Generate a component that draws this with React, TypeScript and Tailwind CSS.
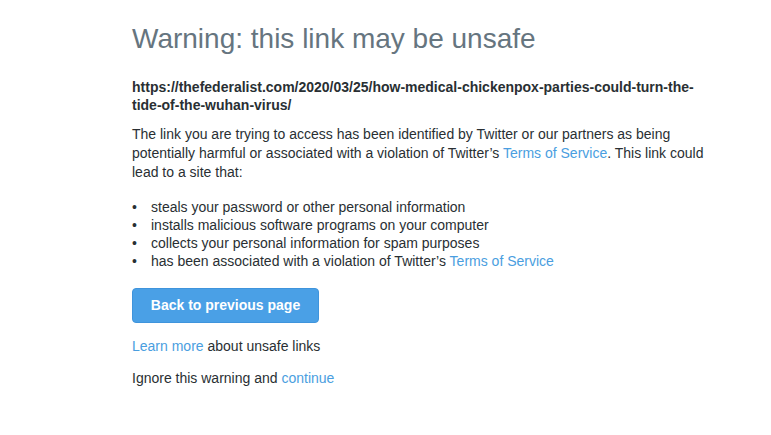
import React from "react";

const Link: React.FC<{ children: React.ReactNode }> = ({ children }) => (
  <a href="#" className="text-[#4a9ee0] no-underline">
    {children}
  </a>
);

const reasons: React.ReactNode[] = [
  "steals your password or other personal information",
  "installs malicious software programs on your computer",
  "collects your personal information for spam purposes",
  <>
    has been associated with a violation of Twitter’s <Link>Terms of Service</Link>
  </>,
];

export default function App() {
  return (
    <div className="min-h-screen bg-white font-['Liberation_Sans',Arial,sans-serif] text-[14px] text-[#292f33]">
      <div className="ml-[132px] w-[580px] pt-[22px]">
        <h1 className="text-[28px] leading-[34px] font-normal text-[#66757f]">
          Warning: this link may be unsafe
        </h1>

        <p className="mt-[22px] font-bold leading-[18px] break-words">
          https://thefederalist.com/2020/03/25/how-medical-chickenpox-parties-could-turn-the-tide-of-the-wuhan-virus/
        </p>

        <p className="mt-[11px] leading-[19px]">
          The link you are trying to access has been identified by Twitter or our partners as being
          potentially harmful or associated with a violation of Twitter’s{" "}
          <Link>Terms of Service</Link>. This link could lead to a site that:
        </p>

        <ul className="mt-[16px] leading-[18px]">
          {reasons.map((r, i) => (
            <li key={i} className="flex">
              <span className="w-[19px] pl-[0px]">•</span>
              <span>{r}</span>
            </li>
          ))}
        </ul>

        <button className="mt-[18px] h-[35px] w-[187px] rounded-[4px] border border-[#3f94dc] bg-[#4aa0e6] text-[14px] font-bold text-white">
          Back to previous page
        </button>

        <p className="mt-[14px] leading-[18px]">
          <Link>Learn more</Link> about unsafe links
        </p>

        <p className="mt-[14px] leading-[18px]">
          Ignore this warning and <Link>continue</Link>
        </p>
      </div>
    </div>
  );
}
